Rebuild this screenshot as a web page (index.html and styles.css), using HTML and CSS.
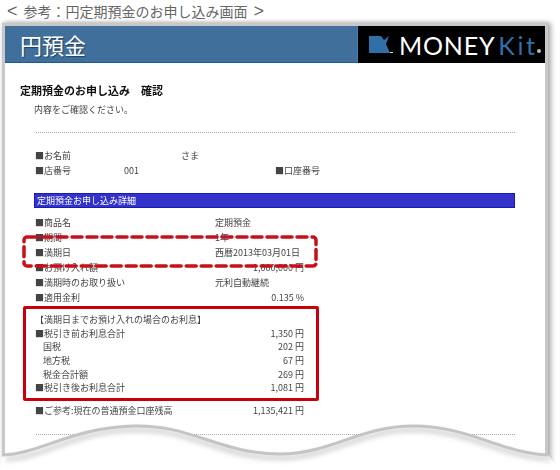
FILE: index.html
```html
<!DOCTYPE html>
<html lang="ja">
<head>
    <title>円定期預金のお申し込み画面</title>
    <meta charset="UTF-8">
    <link rel="stylesheet" href="styles.css">
</head>
<body>
    <p class="caption"><span class="arrow">&lt;</span>参考：円定期預金のお申し込み画面<span class="arrow">&gt;</span></p>

    <div class="frame">
        <div class="header">
            <div class="header-title">円預金</div>
            <div class="logo">
                <svg class="logo-mark" width="24" height="18" viewBox="0 0 24 18">
                    <polygon points="0,0 12,0 15,4 20,0 17,8 21,17 0,17" fill="#2f70a8"/>
                    <rect x="21" y="16" width="3" height="1" fill="#ddd"/>
                </svg>
                <span class="logo-money">MONEY</span><span class="logo-kit">Kit</span><span class="logo-dot"></span>
            </div>
        </div>

        <div class="content">
            <h2>定期預金のお申し込み　確認</h2>
            <p class="intro">内容をご確認ください。</p>
            <div class="dotted"></div>

            <div class="customer">
                <div class="customer-row"><span class="name-label">■お名前</span><span>さま</span></div>
                <div class="customer-row"><span class="branch-label">■店番号</span><span class="branch-value">001</span><span>■口座番号</span></div>
            </div>

            <div class="section-bar">定期預金お申し込み詳細</div>

            <div class="details">
                <div class="row"><span class="label">■商品名</span><span>定期預金</span></div>
                <div class="row"><span class="label">■期間</span><span>1年</span></div>
                <div class="row"><span class="label">■満期日</span><span>西暦2013年03月01日</span></div>
                <div class="row"><span class="label">■お預け入れ額</span><span class="amount">1,000,000 円</span></div>
                <div class="row"><span class="label">■満期時のお取り扱い</span><span>元利自動継続</span></div>
                <div class="row"><span class="label">■適用金利</span><span class="amount">0.135 %</span></div>
            </div>

            <div class="interest">
                <div class="row"><span class="label">【満期日までお預け入れの場合のお利息】</span></div>
                <div class="row"><span class="label">■税引き前お利息合計</span><span class="amount">1,350 円</span></div>
                <div class="row"><span class="label sub">国税</span><span class="amount">202 円</span></div>
                <div class="row"><span class="label sub">地方税</span><span class="amount">67 円</span></div>
                <div class="row"><span class="label sub">税金合計額</span><span class="amount">269 円</span></div>
                <div class="row"><span class="label">■税引き後お利息合計</span><span class="amount">1,081 円</span></div>
            </div>

            <div class="row balance"><span class="label">■ご参考:現在の普通預金口座残高</span><span class="amount">1,135,421 円</span></div>
            <div class="dotted last"></div>
        </div>
    </div>

    <!-- red marks drawn over the screenshot -->
    <svg class="dash-mark" width="300" height="36" viewBox="0 0 300 36">
        <rect x="4" y="3" width="292" height="29" rx="3" fill="none" stroke="#c8101a" stroke-width="3.5" stroke-dasharray="10 5" stroke-linecap="round"/>
    </svg>
    <div class="solid-mark"></div>

    <!-- torn paper edge -->
    <svg class="torn" width="560" height="60" viewBox="0 410 560 60">
        <defs>
            <filter id="soft" x="-5%" y="-30%" width="110%" height="180%">
                <feGaussianBlur stdDeviation="2.5"/>
            </filter>
        </defs>
        <path d="M2 455 C40 454 70 428 133 426 C190 424 220 454 280 454 C330 454 360 426 413 426 C470 426 500 453 548 455 L560 470 L0 470 Z" fill="#fff"/>
        <path d="M6 459 C44 458 74 431 133 430 C190 428 220 458 280 458 C330 458 360 430 413 430 C470 430 500 457 550 459" fill="none" stroke="#ccc" stroke-width="4" filter="url(#soft)"/>
        <path d="M2 455 C40 454 70 428 133 426 C190 424 220 454 280 454 C330 454 360 426 413 426 C470 426 500 453 548 455" fill="none" stroke="#c4c4c4" stroke-width="3"/>
    </svg>
</body>
</html>
```

FILE: styles.css
```css
* {
    padding: 0;
    margin: 0;
    box-sizing: border-box;
}
body {
    position: relative;
    width: 560px;
    height: 470px;
    overflow: hidden;
    background-color: white;
    color: #444;
    font-family: "Noto Sans CJK JP", "Liberation Sans", sans-serif;
    font-size: 9px;
}
.caption {
    display: flex;
    align-items: center;
    gap: 6px;
    height: 23px;
    padding: 0 0 2px 7px;
    color: #666;
    font-size: 14px;
    line-height: 20px;
}
.arrow {
    font-family: "Liberation Sans", sans-serif;
    font-size: 18px;
    line-height: 20px;
}
.frame {
    width: 546px;
    height: 460px;
    margin-left: 2px;
    border: 3px solid #c8c8c8;
    box-shadow: 3px 0 5px #aaa, 0 -1px 3px #ddd;
}
.header {
    display: flex;
    height: 37px;
}
.header-title {
    flex: 1;
    padding-left: 15px;
    background: repeating-linear-gradient(#41719c 0, #41719c 1px, #3d6d98 1px, #3d6d98 2px);
    border-bottom: 1px solid #1f5a94;
    color: white;
    font-size: 22px;
    line-height: 36px;
    text-shadow: 1px 1px 1px #1f4060;
}
.logo {
    display: flex;
    align-items: center;
    width: 188px;
    padding-left: 11px;
    background-color: black;
    border-left: 1px solid #3f7fb5;
    font-family: Lato, sans-serif;
    font-size: 25px;
}
.logo-mark {
    flex: none;
    margin-right: 6px;
}
.logo-money {
    color: white;
    letter-spacing: 0.8px;
}
.logo-kit {
    margin-left: 3px;
    color: #2f70a8;
    letter-spacing: 2.5px;
}
.logo-dot {
    width: 4px;
    height: 4px;
    margin-top: 13px;
    background-color: #bbb;
    border-radius: 50%;
}
.content {
    padding: 19px 30px 0 15px;
    filter: blur(0.3px);
}
h2 {
    color: #111;
    font-size: 11px;
    line-height: 16px;
    font-weight: bold;
}
.intro {
    margin: 5px 0 0 14px;
    line-height: 14px;
}
.dotted {
    margin: 15px 0 0 16px;
    border-top: 1px dotted #aaa;
}
.customer {
    margin: 15px 0 0 15px;
}
.customer-row {
    display: flex;
    height: 15px;
    line-height: 15px;
}
.name-label {
    width: 146px;
}
.branch-label {
    width: 89px;
}
.branch-value {
    width: 151px;
}
.section-bar {
    height: 15px;
    margin: 15px 0 0 14px;
    padding-left: 2px;
    background-color: #3333cc;
    border: 1px solid #1a1ab4;
    color: white;
    line-height: 13px;
}
.details {
    margin: 7px 0 0 15px;
}
.row {
    display: flex;
    height: 15px;
    line-height: 15px;
}
.label {
    width: 180px;
    flex: none;
}
.amount {
    width: 89px;
    text-align: right;
}
.interest {
    margin: 8px 0 0 15px;
}
.interest .row {
    height: 13.7px;
    line-height: 13.7px;
}
.sub {
    padding-left: 8px;
}
.balance {
    margin: 8px 0 0 15px;
}
.last {
    margin-top: 16px;
}
.dash-mark {
    position: absolute;
    left: 20px;
    top: 234px;
}
.solid-mark {
    position: absolute;
    left: 23px;
    top: 306px;
    width: 296px;
    height: 95px;
    border: 3px solid #c8000a;
    border-radius: 2px;
}
.torn {
    position: absolute;
    left: 0;
    top: 410px;
}
```
